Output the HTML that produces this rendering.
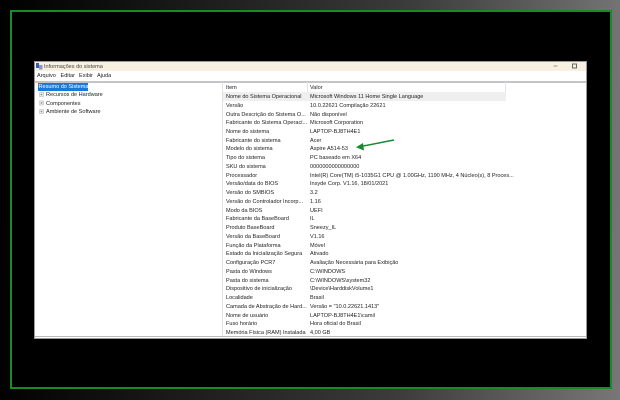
<!DOCTYPE html>
<html><head><meta charset="utf-8"><style>
html,body{margin:0;padding:0;width:620px;height:400px;overflow:hidden;background:#000}
body{position:relative;font-family:"Liberation Sans",sans-serif;color:#222}
.bg{position:absolute;inset:0;background:linear-gradient(92deg,#000 0%,#111 20%,#3c3c3c 65%,#777 100%)}
.frame{position:absolute;left:10px;top:10px;width:598px;height:375px;border:2px solid #1a8a28;background:#000}
.win{position:absolute;left:35px;top:62px;width:551px;height:276px;background:#fff;overflow:hidden}
.edge{position:absolute;left:34px;top:61px;width:552.5px;height:277.5px;background:#9a9a9a}
.title{position:absolute;left:0;top:0;width:100%;height:9px;background:#f8f1e2}
.t{position:absolute;white-space:nowrap;font-size:5.55px;line-height:8px;filter:blur(.3px)}
.sep{position:absolute;left:0;top:19px;width:100%;height:1.5px;background:#c4c4c8}
.split{position:absolute;left:186.5px;top:20px;width:1.5px;height:254px;background:#e2e2e2}
.bot{position:absolute;left:0;top:273.5px;width:100%;height:1.2px;background:#bbb}
.sel{position:absolute;left:3px;top:20.5px;width:49.5px;height:8px;background:#1a78d8}
.hl{position:absolute;left:188px;top:30px;width:283px;height:8.8px;background:#efefef}
.hd{position:absolute;left:188px;top:20px;width:283px;height:9.5px;border-right:.5px solid #e4e4e4;box-sizing:border-box}
.hd2{position:absolute;left:272px;top:20px;width:.5px;height:9.5px;background:#e4e4e4}
.rows{position:absolute;left:0;top:.6px;width:100%;height:100%}
</style></head><body>
<div class="bg"></div>
<div class="frame"></div>
<div class="edge"></div>
<div class="win">
<div class="title"></div>
<svg style="position:absolute;left:1px;top:1px" width="7" height="7" viewBox="0 0 7 7"><rect x="0" y="0" width="3" height="5" fill="#3b5aa8"/><rect x="3" y="2" width="3.5" height="4.5" fill="#8a95c8"/></svg>
<div class="t" style="left:9px;top:.5px;color:#444">Informações do sistema</div>
<svg style="position:absolute;left:0;top:0" width="551" height="10"><rect x="518.5" y="3.5" width="4" height="1" fill="#999"/><rect x="537.5" y="2" width="4" height="4" fill="none" stroke="#666" stroke-width="1"/></svg>
<div class="t" style="left:2px;top:9.5px">Arquivo</div>
<div class="t" style="left:25.5px;top:9.5px">Editar</div>
<div class="t" style="left:44px;top:9.5px">Exibir</div>
<div class="t" style="left:62px;top:9.5px">Ajuda</div>
<div class="sep"></div>
<div class="sel"></div>
<div class="t" style="left:3.5px;top:20.6px;color:#fff">Resumo do Sistema</div>
<svg style="position:absolute;left:0;top:0" width="12" height="60"><g fill="#eee" stroke="#bbb" stroke-width=".6"><rect x="4.5" y="30.5" width="4" height="4"/><rect x="4.5" y="39" width="4" height="4"/><rect x="4.5" y="47.5" width="4" height="4"/></g><path d="M5.5 32.5h2M6.5 31.5v2M5.5 41h2M6.5 40v2M5.5 49.5h2M6.5 48.5v2" stroke="#777" stroke-width=".5"/></svg>
<div class="t" style="left:11px;top:29px">Recursos de Hardware</div>
<div class="t" style="left:11px;top:37.5px">Componentes</div>
<div class="t" style="left:11px;top:46px">Ambiente de Software</div>
<div class="split"></div>
<div class="hd"></div><div class="hd2"></div>
<div class="hl"></div>
<div class="rows">
<div class="t" style="left:191px;top:21px">Item</div><div class="t" style="left:275px;top:21px">Valor</div>
<div class="t" style="left:191px;top:30.5px">Nome do Sistema Operacional</div><div class="t" style="left:275px;top:30.5px">Microsoft Windows 11 Home Single Language</div>
<div class="t" style="left:191px;top:39.2px">Versão</div><div class="t" style="left:275px;top:39.2px">10.0.22621 Compilação 22621</div>
<div class="t" style="left:191px;top:48px">Outra Descrição do Sistema O...</div><div class="t" style="left:275px;top:48px">Não disponível</div>
<div class="t" style="left:191px;top:56.7px">Fabricante do Sistema Operaci...</div><div class="t" style="left:275px;top:56.7px">Microsoft Corporation</div>
<div class="t" style="left:191px;top:65.5px">Nome do sistema</div><div class="t" style="left:275px;top:65.5px">LAPTOP-BJ8TH4E1</div>
<div class="t" style="left:191px;top:74.2px">Fabricante do sistema</div><div class="t" style="left:275px;top:74.2px">Acer</div>
<div class="t" style="left:191px;top:82.9px">Modelo do sistema</div><div class="t" style="left:275px;top:82.9px">Aspire A514-53</div>
<div class="t" style="left:191px;top:91.7px">Tipo do sistema</div><div class="t" style="left:275px;top:91.7px">PC baseado em X64</div>
<div class="t" style="left:191px;top:100.4px">SKU do sistema</div><div class="t" style="left:275px;top:100.4px">0000000000000000</div>
<div class="t" style="left:191px;top:109.2px">Processador</div><div class="t" style="left:275px;top:109.2px">Intel(R) Core(TM) i5-1035G1 CPU @ 1.00GHz, 1190 MHz, 4 Núcleo(s), 8 Proces...</div>
<div class="t" style="left:191px;top:117.9px">Versão/data do BIOS</div><div class="t" style="left:275px;top:117.9px">Insyde Corp. V1.16, 18/01/2021</div>
<div class="t" style="left:191px;top:126.6px">Versão do SMBIOS</div><div class="t" style="left:275px;top:126.6px">3.2</div>
<div class="t" style="left:191px;top:135.4px">Versão do Controlador Incorp...</div><div class="t" style="left:275px;top:135.4px">1.16</div>
<div class="t" style="left:191px;top:144.1px">Modo da BIOS</div><div class="t" style="left:275px;top:144.1px">UEFI</div>
<div class="t" style="left:191px;top:152.9px">Fabricante da BaseBoard</div><div class="t" style="left:275px;top:152.9px">IL</div>
<div class="t" style="left:191px;top:161.6px">Produto BaseBoard</div><div class="t" style="left:275px;top:161.6px">Sneezy_IL</div>
<div class="t" style="left:191px;top:170.3px">Versão da BaseBoard</div><div class="t" style="left:275px;top:170.3px">V1.16</div>
<div class="t" style="left:191px;top:179.1px">Função da Plataforma</div><div class="t" style="left:275px;top:179.1px">Móvel</div>
<div class="t" style="left:191px;top:187.8px">Estado da Inicialização Segura</div><div class="t" style="left:275px;top:187.8px">Ativado</div>
<div class="t" style="left:191px;top:196.6px">Configuração PCR7</div><div class="t" style="left:275px;top:196.6px">Avaliação Necessária para Exibição</div>
<div class="t" style="left:191px;top:205.3px">Pasta do Windows</div><div class="t" style="left:275px;top:205.3px">C:\WINDOWS</div>
<div class="t" style="left:191px;top:214px">Pasta do sistema</div><div class="t" style="left:275px;top:214px">C:\WINDOWS\system32</div>
<div class="t" style="left:191px;top:222.8px">Dispositivo de inicialização</div><div class="t" style="left:275px;top:222.8px">\Device\HarddiskVolume1</div>
<div class="t" style="left:191px;top:231.5px">Localidade</div><div class="t" style="left:275px;top:231.5px">Brasil</div>
<div class="t" style="left:191px;top:240.3px">Camada de Abstração de Hard...</div><div class="t" style="left:275px;top:240.3px">Versão = "10.0.22621.1413"</div>
<div class="t" style="left:191px;top:249px">Nome de usuário</div><div class="t" style="left:275px;top:249px">LAPTOP-BJ8TH4E1\camil</div>
<div class="t" style="left:191px;top:257.7px">Fuso horário</div><div class="t" style="left:275px;top:257.7px">Hora oficial do Brasil</div>
<div class="t" style="left:191px;top:266.5px">Memória Física (RAM) Instalada</div><div class="t" style="left:275px;top:266.5px">4,00 GB</div>
</div>
<div class="bot"></div>
<svg style="position:absolute;left:0;top:0" width="551" height="276"><path d="M359 78 L324 84.8" stroke="#138a2c" stroke-width="1.5" fill="none"/><path d="M321 85.3 L328 81 L329 88.5 Z" fill="#138a2c"/></svg>
</div>
</body></html>
